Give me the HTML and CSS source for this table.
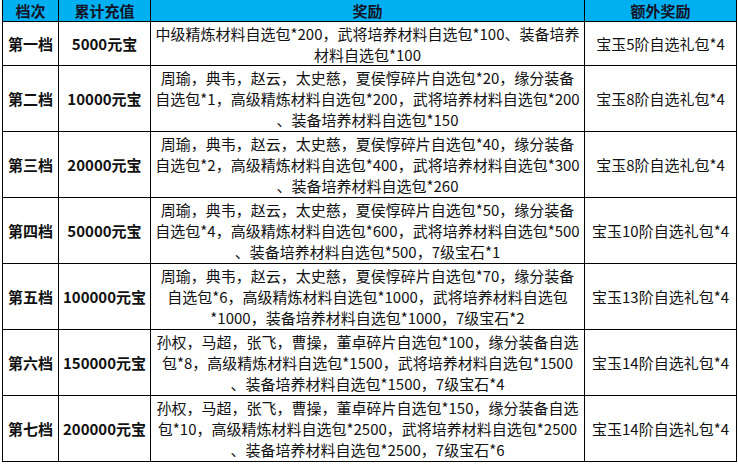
FILE: index.html
```html
<!DOCTYPE html>
<html lang="zh">
<head>
<meta charset="utf-8">
<link rel="stylesheet" href="styles.css">
</head>
<body>
<table class="tbl">
  <colgroup>
    <col class="c1"><col class="c2"><col class="c3"><col class="c4">
  </colgroup>
  <thead>
    <tr><th>档次</th><th>累计充值</th><th>奖励</th><th>额外奖励</th></tr>
  </thead>
  <tbody>
    <tr class="r2">
      <td class="b">第一档</td><td class="b">5000元宝</td>
      <td>中级精炼材料自选包*200，武将培养材料自选包*100、装备培养<br>材料自选包*100</td>
      <td>宝玉5阶自选礼包*4</td>
    </tr>
    <tr class="r3">
      <td class="b">第二档</td><td class="b">10000元宝</td>
      <td>周瑜，典韦，赵云，太史慈，夏侯惇碎片自选包*20，缘分装备<br>自选包*1，高级精炼材料自选包*200，武将培养材料自选包*200<br>、装备培养材料自选包*150</td>
      <td>宝玉8阶自选礼包*4</td>
    </tr>
    <tr class="r3">
      <td class="b">第三档</td><td class="b">20000元宝</td>
      <td>周瑜，典韦，赵云，太史慈，夏侯惇碎片自选包*40，缘分装备<br>自选包*2，高级精炼材料自选包*400，武将培养材料自选包*300<br>、装备培养材料自选包*260</td>
      <td>宝玉8阶自选礼包*4</td>
    </tr>
    <tr class="r3">
      <td class="b">第四档</td><td class="b">50000元宝</td>
      <td>周瑜，典韦，赵云，太史慈，夏侯惇碎片自选包*50，缘分装备<br>自选包*4，高级精炼材料自选包*600，武将培养材料自选包*500<br>、装备培养材料自选包*500，7级宝石*1</td>
      <td>宝玉10阶自选礼包*4</td>
    </tr>
    <tr class="r3">
      <td class="b">第五档</td><td class="b">100000元宝</td>
      <td>周瑜，典韦，赵云，太史慈，夏侯惇碎片自选包*70，缘分装备<br>自选包*6，高级精炼材料自选包*1000，武将培养材料自选包<br>*1000，装备培养材料自选包*1000，7级宝石*2</td>
      <td>宝玉13阶自选礼包*4</td>
    </tr>
    <tr class="r3">
      <td class="b">第六档</td><td class="b">150000元宝</td>
      <td>孙权，马超，张飞，曹操，董卓碎片自选包*100，缘分装备自选<br>包*8，高级精炼材料自选包*1500，武将培养材料自选包*1500<br>、装备培养材料自选包*1500，7级宝石*4</td>
      <td>宝玉14阶自选礼包*4</td>
    </tr>
    <tr class="r3">
      <td class="b">第七档</td><td class="b">200000元宝</td>
      <td>孙权，马超，张飞，曹操，董卓碎片自选包*150，缘分装备自选<br>包*10，高级精炼材料自选包*2500，武将培养材料自选包*2500<br>、装备培养材料自选包*2500，7级宝石*6</td>
      <td>宝玉14阶自选礼包*4</td>
    </tr>
  </tbody>
</table>
</body>
</html>
```
FILE: styles.css
```css
html, body {
  margin: 0;
  padding: 0;
  background: #ffffff;
}
body {
  font-family: "Noto Sans CJK SC", "Noto Sans", sans-serif;
  font-size: 15px;
  color: #111;
}
.tbl {
  margin: -1px 0 0 2px;
  border-collapse: collapse;
  table-layout: fixed;
  width: 734px;
}
.c1 { width: 56px; }
.c2 { width: 92px; }
.c3 { width: 434px; }
.c4 { width: 152px; }
.tbl th, .tbl td {
  border: 1px solid #000;
  padding: 0;
  text-align: center;
  vertical-align: middle;
  white-space: nowrap;
  overflow: hidden;
  line-height: 21px;
}
.tbl th {
  background: #00b0f0;
  font-weight: bold;
  height: 21px;
  color: #141428;
}
.r2 td { height: 43px; }
.r3 td { height: 65px; }
.b { font-weight: bold; }
```
